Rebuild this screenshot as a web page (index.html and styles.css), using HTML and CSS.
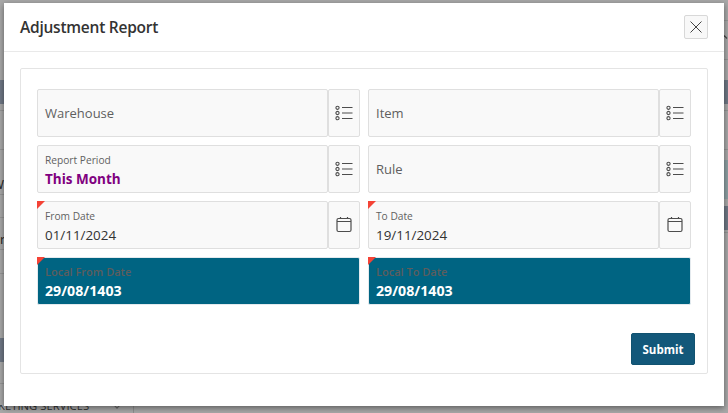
FILE: index.html
```html
<!DOCTYPE html>
<html lang="en">
<head>
<meta charset="utf-8">
<title>Adjustment Report</title>
<link rel="stylesheet" href="styles.css">
</head>
<body>
<svg class="sprites" aria-hidden="true">
  <symbol id="list" viewBox="0 0 18 16">
    <g fill="none" stroke="#4d4d4d">
      <circle cx="2.500" cy="2.800" r="1.600" stroke-width="1.100"/><circle cx="2.500" cy="8" r="1.600" stroke-width="1.100"/><circle cx="2.500" cy="13.200" r="1.600" stroke-width="1.100"/>
      <path d="M7 2.500H17.500M7 8H17.500M7 13.500H17.500" stroke-width="1.200"/>
    </g>
  </symbol>
  <symbol id="cal" viewBox="0 0 16 16">
    <g fill="none" stroke="#4d4d4d" stroke-width="1.200">
      <rect x="1" y="1.500" width="14" height="13" rx="1.500"/>
      <path d="M1 4.500H15M4.500 0V2M11.500 0V2"/>
    </g>
  </symbol>
</svg>

<div class="backdrop">
  <div class="strip strip-left">
    <div class="sp h80"></div><div class="bar h24"></div><div class="sp h7 ruled"></div><div class="sp h39 ruled"></div>
    <div class="sp h45 ruled stub stub-w">W</div><div class="sp h23 ruled"></div><div class="sp h32 ruled stub stub-r">r</div><div class="sp h24 ruled"></div><div class="sp h64"></div>
    <div class="bar h24"></div><div class="sp h22 ruled"></div>
  </div>
  <div class="strip strip-right">
    <div class="sp h21 ruled"></div>
    <div class="sp h39 ruled caret-row"><svg class="caret-mark" viewBox="0 0 4 4"><path d="M0 .5L3 3.500" stroke="#444" stroke-width="1.200" fill="none"/></svg></div>
    <div class="sp h20"></div><div class="bar h24"></div><div class="sp h7 ruled"></div><div class="sp h39 ruled"></div>
    <div class="sp h10"></div><div class="tint"></div><div class="sp h7"></div><div class="bar h24"></div><div class="sp h3 ruled"></div>
  </div>
  <div class="foot"><span class="foot-text">KETING SERVICES</span><span class="foot-caret"></span></div>
</div>

<div class="modal">
  <header class="modal-head">
    <h1 class="modal-title">Adjustment Report</h1>
    <button class="close" aria-label="Close">
      <svg width="12" height="12" viewBox="0 0 12 12"><path d="M.5 .5L11.500 11.500M11.500 .5L.5 11.500" stroke="#444" stroke-width="1" fill="none"/></svg>
    </button>
  </header>
  <div class="modal-body">
    <section class="card">
      <div class="grid">
        <div class="field"><div class="control"><span class="placeholder">Warehouse</span></div><div class="addon"><svg class="ico-list"><use href="#list"/></svg></div></div>
        <div class="field"><div class="control"><span class="placeholder">Item</span></div><div class="addon"><svg class="ico-list"><use href="#list"/></svg></div></div>
        <div class="field"><div class="control"><span class="label">Report Period</span><span class="value purple">This Month</span></div><div class="addon"><svg class="ico-list"><use href="#list"/></svg></div></div>
        <div class="field"><div class="control"><span class="placeholder">Rule</span></div><div class="addon"><svg class="ico-list"><use href="#list"/></svg></div></div>
        <div class="field req"><div class="control"><span class="label">From Date</span><span class="value">01/11/2024</span></div><div class="addon"><svg class="ico-cal"><use href="#cal"/></svg></div></div>
        <div class="field req"><div class="control"><span class="label">To Date</span><span class="value">19/11/2024</span></div><div class="addon"><svg class="ico-cal"><use href="#cal"/></svg></div></div>
        <div class="field req"><div class="control dark"><span class="label">Local From Date</span><span class="value strong">29/08/1403</span></div></div>
        <div class="field req"><div class="control dark"><span class="label">Local To Date</span><span class="value strong">29/08/1403</span></div></div>
      </div>
      <div class="actions"><button class="submit">Submit</button></div>
    </section>
  </div>
</div>
</body>
</html>
```
FILE: styles.css
```css
* { box-sizing: border-box; }
html, body { margin: 0; height: 100%; }
body {
  width: 728px; height: 413px; overflow: hidden; position: relative;
  background: #a9a9a9;
  font-family: "Open Sans", "Noto Sans", sans-serif;
  color: #333;
}
.sprites { width: 0; height: 0; position: absolute; }

.backdrop { position: absolute; inset: 0; display: flex; justify-content: space-between; background: #a8a8a8; }
.strip { width: 4px; display: flex; flex-direction: column; }
.sp { flex: none; }
.h3 { height: 3px; } .h7 { height: 7px; } .h10 { height: 10px; } .h20 { height: 20px; } .h21 { height: 21px; }
.h22 { height: 22px; } .h23 { height: 23px; } .h24 { height: 24px; } .h32 { height: 32px; } .h39 { height: 39px; }
.h45 { height: 45px; } .h64 { height: 64px; } .h80 { height: 80px; }
.ruled { border-bottom: 1px solid #959595; }
.bar { flex: none; background: #6f7885; }
.tint { flex: none; height: 39px; background: #8d9fa3; }
.stub { font-size: 13px; line-height: 1; color: #222; overflow: hidden; display: flex; }
.stub-w { align-items: flex-end; padding-bottom: 3px; margin-left: -8px; width: 12px; }
.stub-r { align-items: flex-end; padding-bottom: 3px; margin-left: 0; }
.caret-row { padding-top: 14px; }
.caret-mark { display: block; width: 4px; height: 4px; }
.foot {
  position: absolute; left: 0; bottom: 0; width: 134px; height: 8px;
  border-right: 1px solid #8f8f8f; overflow: hidden;
}
.foot-text { position: absolute; left: -2px; top: -7px; font-size: 11.300px; line-height: 16px; color: #333; white-space: nowrap; }
.foot-caret {
  position: absolute; left: 115px; top: -1px; width: 4px; height: 4px;
  border-right: 1px solid #666; border-bottom: 1px solid #666; transform: rotate(45deg);
}

.modal {
  position: absolute; left: 4px; top: 3px; width: 720px; height: 403px;
  background: #fff;
  box-shadow: 0 2px 6px rgba(0,0,0,.45);
  display: flex; flex-direction: column;
}
.modal-head {
  height: 49px; flex: none; display: flex; align-items: center; justify-content: space-between;
  padding: 0 16px; border-bottom: 1px solid #e9e9e9;
}
.modal-title { margin: 0; font-size: 15.500px; font-weight: 600; letter-spacing: -.24px; color: #333; line-height: 20px; }
.close {
  width: 24px; height: 24px; padding: 0; display: flex; align-items: center; justify-content: center;
  background: #f8f8f8; border: 1px solid #d8d8d8; border-radius: 2px;
}
.modal-body { padding: 16px 16px 0 16px; flex: 1; }
.card { height: 306px; width: 688px; border: 1px solid #e4e4e4; border-radius: 2px; padding: 20px 16px 0 16px; }
.grid { display: grid; grid-template-columns: 323px 323px; column-gap: 8px; row-gap: 8px; grid-auto-rows: 48px; }

.field { display: flex; position: relative; }
.req::before {
  content: ""; position: absolute; left: 0; top: 0; width: 0; height: 0;
  border-style: solid; border-width: 8px 8px 0 0; border-color: #f44336 transparent transparent transparent;
}
.control {
  flex: 1; min-width: 0; display: flex; flex-direction: column; justify-content: center;
  background: #f9f9f9; border: 1px solid #dfdfdf; border-radius: 2px; padding: 0 7px;
}
.addon {
  flex: none; width: 32px; display: flex; align-items: center; justify-content: center;
  background: #f9f9f9; border: 1px solid #dfdfdf; border-radius: 2px;
}
.ico-list { width: 18px; height: 16px; }
.ico-cal { width: 16px; height: 16px; }
.placeholder { font-size: 13px; line-height: 18px; color: #5f5f5f; }
.label { font-size: 10.200px; line-height: 14px; color: #616161; padding-top: 3px; }
.value { font-size: 13.400px; line-height: 18px; margin-top: 3px; color: #333; }
.purple { color: #800080; font-weight: 700; font-size: 13.500px; }
.dark { background: #006482; border-color: #e4eaee; }
.dark .label { color: #5d5d5d; font-size: 11px; font-weight: 600; }
.strong { color: #fff; font-weight: 700; font-size: 14.200px; }
.actions { display: flex; justify-content: flex-end; margin-top: 28px; margin-right: -4px; }
.submit {
  width: 64px; height: 32px; padding: 0; font: 700 11.500px "Open Sans", sans-serif; color: #fff;
  background: #13587a; border: 1px solid #115270; border-radius: 2px;
}
```
